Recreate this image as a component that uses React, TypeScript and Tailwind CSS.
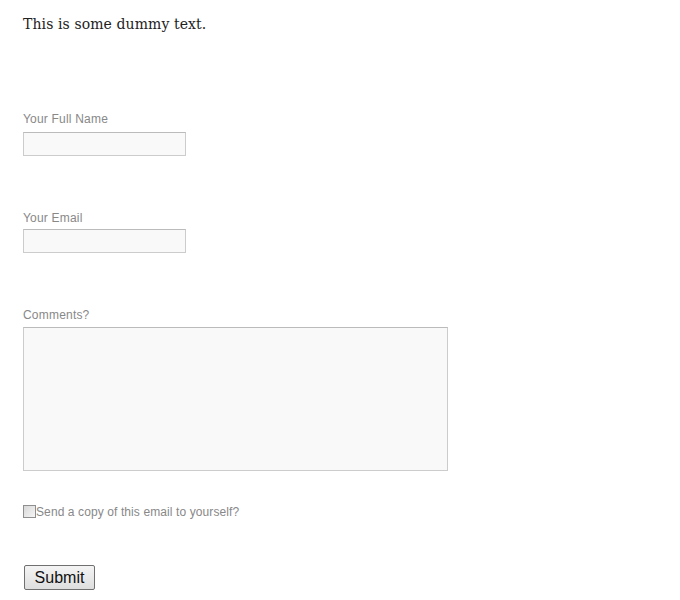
export default function App() {
  return (
    <div className="min-h-screen bg-white px-[23px] pt-[13px] font-['Liberation_Sans',Arial,sans-serif]">
      <p className="font-['DejaVu_Serif',Georgia,serif] text-[14px] leading-[22px] tracking-[0.1px] text-[#222]">
        This is some dummy text.
      </p>

      <form className="mt-[77px]">
        <div>
          <label className="block text-[12px] leading-[14px] tracking-[0.2px] text-[#888]">Your Full Name</label>
          <input
            type="text"
            className="mt-[6px] block h-[24px] w-[163px] border border-[#cccccc] border-t-[#bbbbbb] bg-[#f9f9f9] outline-none"
          />
        </div>

        <div className="mt-[55px]">
          <label className="block text-[12px] leading-[14px] tracking-[0.2px] text-[#888]">Your Email</label>
          <input
            type="text"
            className="mt-[4px] block h-[24px] w-[163px] border border-[#cccccc] border-t-[#bbbbbb] bg-[#f9f9f9] outline-none"
          />
        </div>

        <div className="mt-[55px]">
          <label className="block text-[12px] leading-[14px] tracking-[0.2px] text-[#888]">Comments?</label>
          <textarea className="mt-[5px] block h-[144px] w-[425px] resize-none border border-[#cccccc] border-t-[#bbbbbb] bg-[#f9f9f9] outline-none" />
        </div>

        <div className="mt-[33px] flex items-center">
          <span className="inline-block h-[13px] w-[13px] border border-[#8f8f8f] bg-gradient-to-br from-[#d8d8d8] to-[#f6f6f6]" />
          <span className="mt-[1px] text-[12px] leading-[14px] tracking-[0.1px] text-[#888]">
            Send a copy of this email to yourself?
          </span>
        </div>

        <button
          type="button"
          className="mt-[46px] ml-[1px] block h-[25px] w-[71px] rounded-[2px] border border-[#707070] bg-gradient-to-b from-[#f4f4f4] to-[#dedede] text-[16px] leading-[20px] text-[#111]"
        >
          Submit
        </button>
      </form>
    </div>
  );
}
